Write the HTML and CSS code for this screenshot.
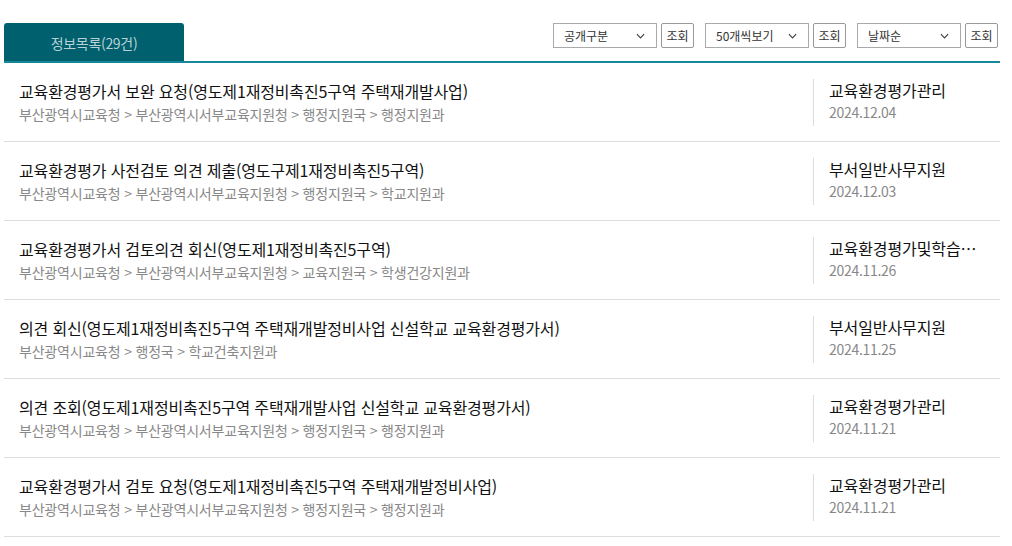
FILE: index.html
```html
<!DOCTYPE html>
<html lang="ko">
  <head>
    <meta charset="UTF-8" />
    <meta name="viewport" content="width=device-width, initial-scale=1" />
    <link rel="stylesheet" href="styles.css">
  </head>
  <body>
    <div class="board">
      <div class="board-head">
        <div class="tab">정보목록(29건)</div>
        <div class="filters">
          <div class="filter">
            <div class="select">공개구분 <svg viewBox="0 0 10 6"><path d="M1 1l4 4 4-4" /></svg></div>
            <button class="btn">조회</button>
          </div>
          <div class="filter">
            <div class="select">50개씩보기 <svg viewBox="0 0 10 6"><path d="M1 1l4 4 4-4" /></svg></div>
            <button class="btn">조회</button>
          </div>
          <div class="filter">
            <div class="select">날짜순 <svg viewBox="0 0 10 6"><path d="M1 1l4 4 4-4" /></svg></div>
            <button class="btn">조회</button>
          </div>
        </div>
      </div>

      <ul class="list">
        <li class="item">
          <div class="main">
            <p class="title">교육환경평가서 보완 요청(영도제1재정비촉진5구역 주택재개발사업)</p>
            <p class="path">부산광역시교육청 &gt; 부산광역시서부교육지원청 &gt; 행정지원국 &gt; 행정지원과</p>
          </div>
          <div class="side">
            <p class="dept">교육환경평가관리</p>
            <p class="date">2024.12.04</p>
          </div>
        </li>
        <li class="item">
          <div class="main">
            <p class="title">교육환경평가 사전검토 의견 제출(영도구제1재정비촉진5구역)</p>
            <p class="path">부산광역시교육청 &gt; 부산광역시서부교육지원청 &gt; 행정지원국 &gt; 학교지원과</p>
          </div>
          <div class="side">
            <p class="dept">부서일반사무지원</p>
            <p class="date">2024.12.03</p>
          </div>
        </li>
        <li class="item">
          <div class="main">
            <p class="title">교육환경평가서 검토의견 회신(영도제1재정비촉진5구역)</p>
            <p class="path">부산광역시교육청 &gt; 부산광역시서부교육지원청 &gt; 교육지원국 &gt; 학생건강지원과</p>
          </div>
          <div class="side">
            <p class="dept" title="교육환경평가및학습지원">교육환경평가및학습…</p>
            <p class="date">2024.11.26</p>
          </div>
        </li>
        <li class="item">
          <div class="main">
            <p class="title">의견 회신(영도제1재정비촉진5구역 주택재개발정비사업 신설학교 교육환경평가서)</p>
            <p class="path">부산광역시교육청 &gt; 행정국 &gt; 학교건축지원과</p>
          </div>
          <div class="side">
            <p class="dept">부서일반사무지원</p>
            <p class="date">2024.11.25</p>
          </div>
        </li>
        <li class="item">
          <div class="main">
            <p class="title">의견 조회(영도제1재정비촉진5구역 주택재개발사업 신설학교 교육환경평가서)</p>
            <p class="path">부산광역시교육청 &gt; 부산광역시서부교육지원청 &gt; 행정지원국 &gt; 행정지원과</p>
          </div>
          <div class="side">
            <p class="dept">교육환경평가관리</p>
            <p class="date">2024.11.21</p>
          </div>
        </li>
        <li class="item">
          <div class="main">
            <p class="title">교육환경평가서 검토 요청(영도제1재정비촉진5구역 주택재개발정비사업)</p>
            <p class="path">부산광역시교육청 &gt; 부산광역시서부교육지원청 &gt; 행정지원국 &gt; 행정지원과</p>
          </div>
          <div class="side">
            <p class="dept">교육환경평가관리</p>
            <p class="date">2024.11.21</p>
          </div>
        </li>
      </ul>
    </div>
  </body>
</html>
```

FILE: styles.css
```css
* {
  box-sizing: border-box;
}
body {
  margin: 0;
  padding: 0;
  background: #fff;
  font-family: "Noto Sans CJK KR", "Noto Sans", sans-serif;
  color: #111;
}
p {
  margin: 0;
}

.board {
  width: 996px;
  margin-left: 4px;
}

.board-head {
  display: flex;
  justify-content: space-between;
  align-items: flex-start;
  padding-top: 23px;
  border-bottom: 2px solid #17879a;
}
.tab {
  width: 180px;
  height: 38px;
  background: #00606e;
  border-radius: 3px 3px 0 0;
  color: #b9d1d6;
  font-size: 14px;
  line-height: 40px;
  letter-spacing: -0.3px;
  text-align: center;
}

.filters {
  display: flex;
  gap: 11px;
  padding-right: 2px;
}
.filter {
  display: flex;
  gap: 4px;
}
.select {
  width: 104px;
  height: 25px;
  border: 1px solid #aaa;
  display: flex;
  align-items: center;
  justify-content: space-between;
  padding: 0 11px 0 10px;
  font-size: 12px;
  color: #333;
}
.select svg {
  width: 9px;
  height: 6px;
  fill: none;
  stroke: #444;
  stroke-width: 1.3;
}
.btn {
  width: 33px;
  height: 25px;
  padding: 0;
  border: 1px solid #999;
  border-radius: 2px;
  background: #fff;
  font-family: inherit;
  font-size: 12px;
  color: #333;
}

.list {
  list-style: none;
  margin: 0;
  padding: 0;
}
.item {
  display: flex;
  padding: 16px 0 15px;
  border-bottom: 1px solid #ddd;
}
.main {
  flex: 1;
  padding-left: 15px;
}
.title {
  font-size: 16px;
  line-height: 24px;
  letter-spacing: -0.15px;
}
.path {
  font-size: 14px;
  line-height: 23px;
  color: #888;
  letter-spacing: -0.2px;
}
.side {
  width: 187px;
  border-left: 1px solid #ddd;
  padding: 0 10px 0 15px;
}
.dept {
  font-size: 16px;
  line-height: 22px;
  letter-spacing: -0.1px;
  white-space: nowrap;
}
.date {
  font-size: 14px;
  line-height: 23px;
  color: #888;
  letter-spacing: -0.3px;
}
```
